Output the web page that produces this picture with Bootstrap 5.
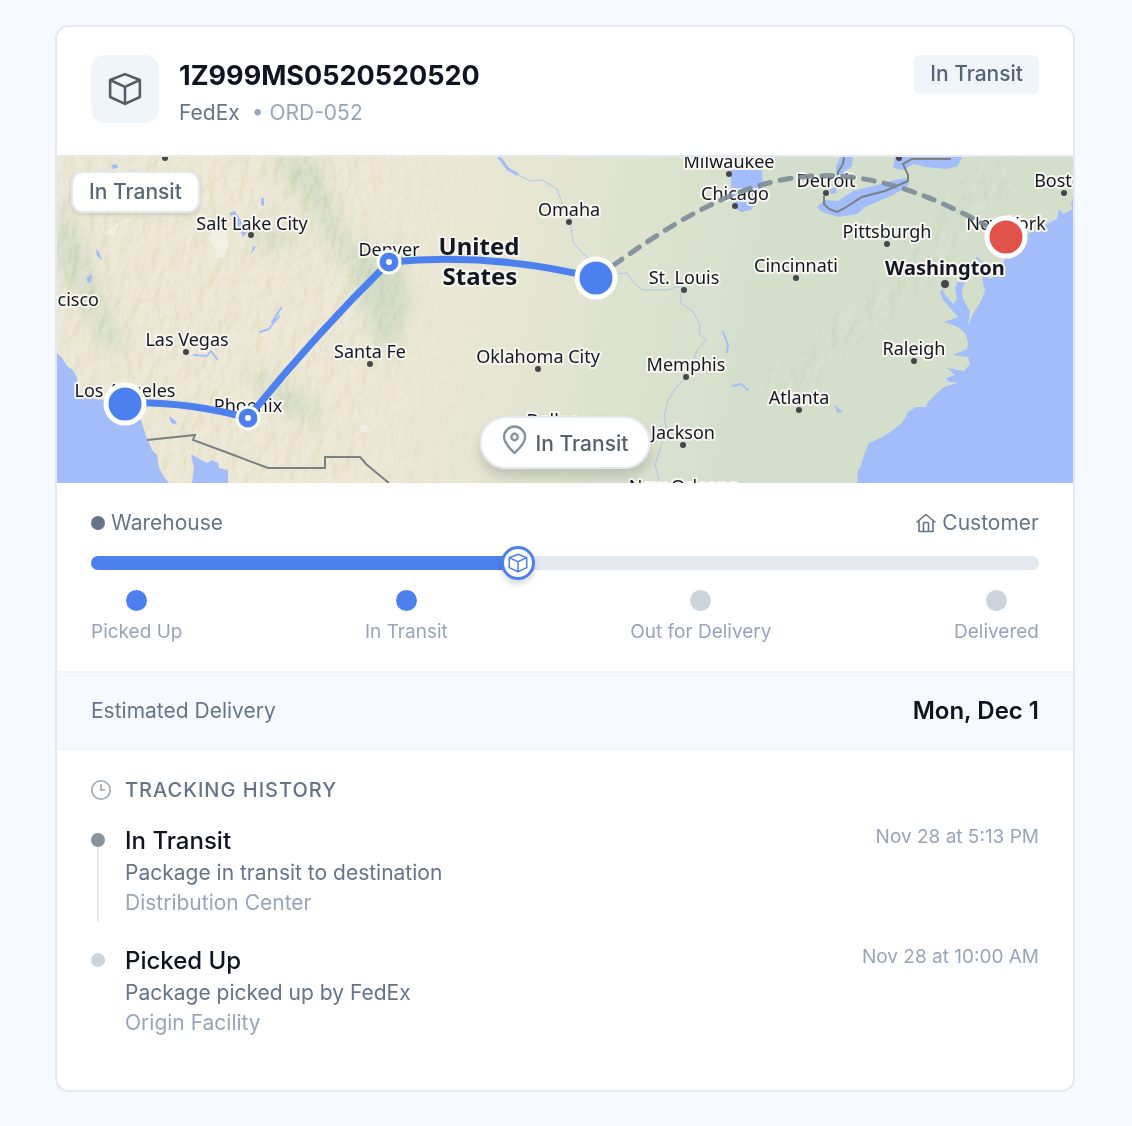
<!DOCTYPE html>
<html lang="en">
<head>
<meta charset="utf-8">
<meta name="viewport" content="width=device-width, initial-scale=1">
<title>Shipment tracking</title>
<link href="https://cdn.jsdelivr.net/npm/bootstrap@5.3.0/dist/css/bootstrap.min.css" rel="stylesheet">
<style>
  :root { --ink: #0f1422; --slate: #667489; --mist: #98a5b8; --line: #e3e8f1; --soft: #f0f5fa; --brand: #4d80ef; }
  body { background: #f6fafe; font-family: Inter, "Liberation Sans", sans-serif; font-size: 21px; line-height: 24px; color: var(--slate); }
  .page-wrap { padding: 25px 57px 34px 55px; }
  .track-card { border: 2px solid var(--line); border-radius: 14px; background: #fff; overflow: hidden; }
  .track-head { padding: 28px 34px 32px; border-bottom: 2px solid var(--line); }
  .icon-tile { width: 68px; height: 68px; border-radius: 14px; background: var(--soft); color: #555b66; }
  .track-id { font-size: 27px; line-height: 34px; font-weight: 700; color: var(--ink); margin: 4px 0 8px; }
  .track-sub { margin-bottom: -2px; }
  .tone-mist { color: var(--mist); }
  .status-tag { background: var(--soft); color: #556274; font-weight: 500; padding: 7px 16px 8px; border-radius: 6px; }
  .status-chip { left: 14px; top: 14px; padding: 7px 16px; border: 2px solid var(--line); border-radius: 12px; background: #fffffff8; color: #5a6672; font-weight: 500; box-shadow: 0 2px 4px #0000001c; }
  .status-pill { left: 50%; bottom: 14px; transform: translateX(-50%); gap: 8px; padding: 7px 20px 11px; border: 2px solid var(--line); border-radius: 27px; background: #fffffffc; color: #56616f; font-weight: 500; box-shadow: 0 8px 12px #00000024; }
  .status-pill span { padding-top: 7px; }
  .map-labels text { font-family: "Noto Sans", sans-serif; font-size: 18px; text-anchor: middle; fill: #131826; stroke: #f8f6ee; stroke-width: 4px; stroke-linejoin: round; paint-order: stroke; }
  .map-labels .capital { font-size: 20px; font-weight: 700; }
  .map-labels .country { font-size: 24px; font-weight: 700; }
  .map-labels .at-edge { text-anchor: end; }
  .stage-block { padding: 28px 34px; }
  .route-track { margin-top: 21px; }
  .route-bar { --bs-progress-height: 14px; --bs-progress-bg: var(--line); --bs-progress-bar-bg: var(--brand); --bs-progress-border-radius: 7px; }
  .bar-knob { width: 34px; height: 34px; top: -10px; margin-left: -17px; border: 3px solid var(--brand); background: #fff; color: var(--brand); box-shadow: 0 4px 6px #00000026; }
  .bullet { width: 14px; height: 14px; border-radius: 50%; background: var(--slate); flex: none; }
  .place { gap: 6px; }
  .step-dot { width: 21px; height: 21px; border-radius: 50%; background: #cbd3dc; margin-bottom: 10px; }
  .step-dot.done { background: var(--brand); }
  .step-text { font-size: 19px; line-height: 22px; color: var(--mist); }
  .eta-band { padding: 22px 34px 21px; background: #f6fafe; border-top: 2px solid var(--soft); border-bottom: 2px solid var(--soft); }
  .eta-day { font-size: 24px; line-height: 32px; font-weight: 600; color: var(--ink); }
  .history { padding: 28px 34px 24px; }
  .history-title { font-size: 20px; line-height: 24px; font-weight: 500; letter-spacing: 1px; margin: 0 0 24px; gap: 14px; }
  .event { gap: 20px; }
  .event-rail { width: 14px; padding-top: 7px; margin-bottom: 24px; }
  .event-rail .stem { width: 2px; background: var(--line); }
  .event-body { padding-bottom: 28px; line-height: 30px; }
  .event-name { font-size: 24px; line-height: 30px; font-weight: 500; color: var(--ink); margin: 0 0 2px; }
</style>
<script src="https://cdn.jsdelivr.net/npm/bootstrap@5.3.0/dist/js/bootstrap.bundle.min.js"></script>
</head>
<body>
<svg class="d-none" aria-hidden="true">
  <symbol id="cube" viewBox="0 0 32 32"><path d="M16 2 L30 7.5 V23.5 L16 30 L2 23.5 V7.5 Z M2 7.5 L16 14 L30 7.5 M16 14 V30" fill="none" stroke="currentColor" stroke-linejoin="round" stroke-linecap="round"/></symbol>
</svg>
<main class="page-wrap">
  <article class="track-card">
    <header class="track-head d-flex align-items-start">
      <div class="icon-tile d-flex align-items-center justify-content-center">
        <svg width="34" height="34" stroke-width="2.4" aria-hidden="true"><use href="#cube"/></svg>
      </div>
      <div class="flex-grow-1 ms-3 ps-1">
        <h1 class="track-id">1Z999MS0520520520</h1>
        <div class="track-sub d-flex gap-2"><span class="me-1">FedEx</span><span class="tone-mist">• ORD-052</span></div>
      </div>
      <span class="status-tag">In Transit</span>
    </header>

    <section class="position-relative" aria-label="Route map">
      <svg class="d-block w-100" viewBox="57 157 1016 326" role="img" aria-label="Los Angeles to New York by way of Phoenix and Denver">
        <defs>
          <linearGradient id="land" gradientUnits="userSpaceOnUse" x1="430" y1="280" x2="760" y2="340">
            <stop offset="0" stop-color="#ece7d5"/><stop offset=".45" stop-color="#e0e4d0"/><stop offset="1" stop-color="#d3dfcb"/>
          </linearGradient>
          <filter id="relief" x="0" y="0" width="100%" height="100%" color-interpolation-filters="sRGB">
            <feTurbulence type="fractalNoise" baseFrequency=".085 .05" numOctaves="3" seed="8"/>
            <feColorMatrix values="0 0 0 0 0  0 0 0 0 0  0 0 0 0 0  1 0 0 0 0"/>
            <feDiffuseLighting surfaceScale="6" diffuseConstant=".64" lighting-color="#fff"><feDistantLight azimuth="215" elevation="52"/></feDiffuseLighting>
          </filter>
          <filter id="soft" x="-40%" y="-40%" width="180%" height="180%"><feGaussianBlur stdDeviation="9"/></filter>
          <linearGradient id="west" gradientUnits="userSpaceOnUse" x1="340" y1="0" x2="490" y2="0"><stop offset="0" stop-color="#fff"/><stop offset="1" stop-color="#000"/></linearGradient>
          <mask id="ranges" maskUnits="userSpaceOnUse" x="57" y="157" width="1016" height="326">
            <rect x="57" y="157" width="440" height="326" fill="url(#west)"/>
            <path d="M770 400 L850 330 L915 270 L965 210 L1010 160" fill="none" stroke="#999" stroke-width="42" filter="url(#soft)"/>
          </mask>
        </defs>
        <rect x="57" y="157" width="1016" height="326" fill="url(#land)"/>
        <g fill="#c9d8c0" opacity=".75" filter="url(#soft)">
          <path d="M57 200 L75 225 L105 310 L125 345 L112 355 L85 310 L57 260Z"/>
          <path d="M270 157 L315 157 L325 190 L350 245 L400 250 L410 300 L392 365 L372 330 L350 270 L305 200Z"/>
          <path d="M245 365 L310 400 L320 425 L280 410Z"/><path d="M250 228 L295 230 L290 245 L252 243Z"/>
        </g>
        <g mask="url(#ranges)" style="mix-blend-mode:overlay" opacity=".34"><rect x="57" y="157" width="1016" height="326" filter="url(#relief)"/></g>
        <g fill="#f2f1e8" opacity=".85">
          <path d="M213 232 L226 228 L228 245 L224 257 L217 258 L214 246 L208 239Z"/><path d="M105 232 L120 222 L114 236Z"/><path d="M360 425h7v7h-6z"/>
        </g>

        <!-- oceans, gulfs and lakes -->
        <g fill="#a3bdfb">
          <path d="M57 353 L62 358 L68 367 L73 370 L77 378 L78 394 L88 398 L104 400 L118 408 L141 420 L146 436 L152 450 L157 455 L159 468 L164 477 L169 483 H57Z"/>
          <path d="M191 454 L203 461 L208 463 L211 460 L218 463 L219 468 L228 470 V483 H192 L194 468Z"/>
          <path d="M169 416 L176 421 L177 425 L171 423Z"/>
          <path d="M1073 197 L1071 204 L1073 209 L1063 214 L1059 209 L1057 219 L1043 226 L1035 233 L1020 236 L1008 252 L1003 263 L998 272 L990 279 L982 272 L983 283 L985 291 L980 303 L973 314 L968 326 L970 311 L963 299 L962 289 L965 282 L958 281 L955 288 L957 299 L953 304 L943 292 L945 288 L940 292 L944 301 L958 317 L944 322 L958 327 L966 334 L968 343 L967 349 L953 355 L968 357 L970 364 L964 371 L947 368 L955 375 L946 378 L949 382 L958 383 L944 387 L938 392 L928 402 L926 407 L916 407 L908 412 L902 423 L889 433 L876 440 L869 443 L864 455 L860 468 L858 470 L857 483 H1073Z"/>
          <path d="M731 170 L762 170 L763 187 L756 203 L751 210 L741 212 L734 207 L731 190Z"/>
          <path d="M840 157 L853 157 L852 166 L842 174 L837 178 L836 167Z"/>
          <path d="M829 190 L836 187 L837 193 L831 194Z"/>
          <path d="M824 200 L817 207 L822 212 L838 217 L857 214 L865 207 L893 195 L908 186 L908 178 L895 180 L877 185 L853 191 L838 201Z"/>
          <path d="M893 168 L895 157 L962 157 L958 166 L946 169 L926 167 L913 164 L903 170Z"/>
          <path d="M111 165 L117 164 L118 168 L113 169Z"/><path d="M261 198 L264 198 L264 206 L261 205Z"/><path d="M229 213 L235 211 L240 219 L248 231 L243 237 L236 222Z"/><path d="M253 246 L256 247 L251 254Z"/><path d="M96 249 L99 252 L102 260 L97 256Z"/><path d="M87 277 L92 274 L91 283 L87 282Z"/><path d="M835 405 L843 412 L837 413Z"/>
        </g>
        <g fill="none" stroke="#a3bdfb" stroke-width="2" stroke-linecap="round" stroke-linejoin="round">
          <path d="M281 308 L272 322 L277 319"/><path d="M279 316 L269 329 L260 332"/><path d="M194 355 L207 356 L211 351 L217 359"/>
          <path d="M499 157 L508 169 L517 174" stroke-width="3"/>
          <g stroke-width="1" stroke="#afc4ef">
            <path d="M517 174 L530 181 L542 180 L557 189 L562 203 L570 217 L573 242 L582 253 L592 260"/>
            <path d="M615 274 L627 273 L632 281 L642 290 L668 290 L682 285 L680 302 L693 312 L700 325 L699 334 L706 340 L697 350 L690 373 L676 388 L668 400 L664 418 L667 430 L660 449 L655 465 L660 483"/>
          </g>
          <path d="M723 332 L728 345 L727 352"/><path d="M733 386 L741 384 L748 390"/><path d="M983 264 L977 258"/><path d="M1027 235 L1040 230"/>
        </g>
        <path d="M147 440 L195 435 L193 440 L231 454 L268 468 H325 V457 H360 L366 464 L378 474 L389 483 M844 157 L843 164 L838 172 L837 182 M824 196 L824 204 L829 209 L837 212 L843 209 L862 197 L885 191 L908 181 L908 175 L903 164 L912 159 H951" fill="none" stroke="#7b8085" stroke-width="2"/>

        <g fill="#44464b">
          <circle cx="165" cy="158" r="3"/><circle cx="251" cy="235" r="3"/><circle cx="186" cy="352" r="3"/><circle cx="370" cy="364" r="3"/><circle cx="569" cy="222" r="3"/><circle cx="538" cy="369" r="3"/><circle cx="684" cy="290" r="3"/><circle cx="686" cy="377" r="3"/><circle cx="683" cy="445" r="3"/><circle cx="729" cy="174" r="3"/><circle cx="735" cy="206" r="3"/><circle cx="826" cy="193" r="3"/><circle cx="899" cy="158" r="3"/><circle cx="887" cy="244" r="3"/><circle cx="796" cy="278" r="3"/><circle cx="945" cy="284" r="4"/><circle cx="914" cy="361" r="3"/><circle cx="799" cy="410" r="3"/><circle cx="1064" cy="193" r="3"/>
        </g>
        <g class="map-labels">
          <text x="252" y="230">Salt Lake City</text><text x="389" y="256">Denver</text><text class="at-edge" x="99" y="306">San Francisco</text>
          <text x="187" y="346">Las Vegas</text><text x="370" y="358">Santa Fe</text><text x="125" y="397">Los Angeles</text><text x="248" y="412">Phoenix</text>
          <text x="569" y="216">Omaha</text><text x="538" y="363">Oklahoma City</text><text x="684" y="284">St. Louis</text><text x="686" y="371">Memphis</text>
          <text x="683" y="439">Jackson</text><text x="552" y="427">Dallas</text><text x="683" y="493">New Orleans</text>
          <text x="729" y="168">Milwaukee</text><text x="735" y="200">Chicago</text><text x="826" y="187">Detroit</text><text x="887" y="238">Pittsburgh</text>
          <text x="796" y="272">Cincinnati</text><text x="914" y="355">Raleigh</text><text x="799" y="404">Atlanta</text><text x="1006" y="230">New York</text><text x="1064" y="187">Boston</text>
          <text class="capital" x="945" y="275">Washington</text>
          <text class="country" x="479" y="255">United</text><text class="country" x="480" y="285">States</text>
        </g>
        <path d="M596 278 C745 168 835 135 1006 237" fill="none" stroke="#7c8c97" stroke-width="5" stroke-dasharray="11 10" stroke-linecap="round" opacity=".9"/>
        <path d="M125 403 Q185 401 248 418 Q312 338 389 262 Q492 252 596 278" fill="none" stroke="#4d80ef" stroke-width="7" stroke-linejoin="round"/>
        <g fill="#4d80ef" stroke="#fff">
          <circle cx="125" cy="404" r="19" stroke-width="5"/><circle cx="596" cy="278" r="19" stroke-width="5"/><circle cx="1006" cy="237" r="19" stroke-width="5" fill="#e1524b"/>
          <circle cx="248" cy="418" r="11" stroke-width="3"/><circle cx="389" cy="262" r="11" stroke-width="3"/>
        </g>
        <g fill="#fff"><circle cx="248" cy="418" r="3"/><circle cx="389" cy="262" r="3"/></g>
      </svg>
      <div class="status-chip position-absolute">In Transit</div>
      <div class="status-pill position-absolute d-flex text-nowrap">
        <svg width="26" height="30" viewBox="0 0 26 30" fill="none" stroke="#82939a" stroke-width="2.4" stroke-linejoin="round" aria-hidden="true"><path d="M13 28 C10 25 2.500 19 2.500 12 A10.500 10.500 0 0 1 23.500 12 C23.500 19 16 25 13 28Z"/><circle cx="13" cy="12" r="3.200"/></svg>
        <span>In Transit</span>
      </div>
    </section>

    <section class="stage-block" aria-label="Delivery progress">
      <div class="d-flex justify-content-between">
        <div class="place d-flex align-items-center"><i class="bullet"></i>Warehouse</div>
        <div class="place d-flex align-items-center">
          <svg width="20" height="20" viewBox="0 0 20 20" fill="none" stroke="currentColor" stroke-width="1.600" stroke-linejoin="round" stroke-linecap="round" aria-hidden="true"><path d="M1 9 L10 1.500 L19 9 M3 7.500 V18.500 H17 V7.500 M7.500 18 V10.500 Q7.500 9.500 8.500 9.500 H11.500 Q12.500 9.500 12.500 10.500 V18"/></svg>Customer
        </div>
      </div>
      <div class="route-track position-relative">
        <div class="progress route-bar" role="progressbar" aria-label="Shipment progress" aria-valuenow="45" aria-valuemin="0" aria-valuemax="100"><div class="progress-bar" style="width:45%"></div></div>
        <div class="bar-knob position-absolute rounded-circle d-flex align-items-center justify-content-center" style="left:45%"><svg width="20" height="20" stroke-width="2.4" aria-hidden="true"><use href="#cube"/></svg></div>
      </div>
      <div class="d-flex justify-content-between step-text mt-3 pt-1">
        <div class="d-flex flex-column align-items-center"><i class="step-dot done"></i>Picked Up</div>
        <div class="d-flex flex-column align-items-center"><i class="step-dot done"></i>In Transit</div>
        <div class="d-flex flex-column align-items-center"><i class="step-dot"></i>Out for Delivery</div>
        <div class="d-flex flex-column align-items-center"><i class="step-dot"></i>Delivered</div>
      </div>
    </section>

    <section class="eta-band d-flex justify-content-between align-items-center">
      <span>Estimated Delivery</span><span class="eta-day">Mon, Dec 1</span>
    </section>

    <section class="history">
      <h2 class="history-title d-flex align-items-center">
        <svg width="20" height="20" viewBox="0 0 20 20" fill="none" stroke="#98a5b8" stroke-width="1.600" stroke-linecap="round" aria-hidden="true"><circle cx="10" cy="10" r="9.200"/><path d="M10 4.500 V10 H13.500"/></svg>TRACKING HISTORY
      </h2>
      <ol class="list-unstyled m-0">
        <li class="event d-flex">
          <div class="event-rail d-flex flex-column align-items-center"><i class="bullet" style="background:#86959b"></i><i class="stem flex-grow-1"></i></div>
          <div class="event-body flex-grow-1"><h3 class="event-name">In Transit</h3><div>Package in transit to destination</div><div class="tone-mist">Distribution Center</div></div>
          <time class="step-text">Nov 28 at 5:13 PM</time>
        </li>
        <li class="event d-flex">
          <div class="event-rail d-flex flex-column align-items-center"><i class="bullet" style="background:#cbd3dc"></i></div>
          <div class="event-body flex-grow-1"><h3 class="event-name">Picked Up</h3><div>Package picked up by FedEx</div><div class="tone-mist">Origin Facility</div></div>
          <time class="step-text">Nov 28 at 10:00 AM</time>
        </li>
      </ol>
    </section>
  </article>
</main>
</body>
</html>
